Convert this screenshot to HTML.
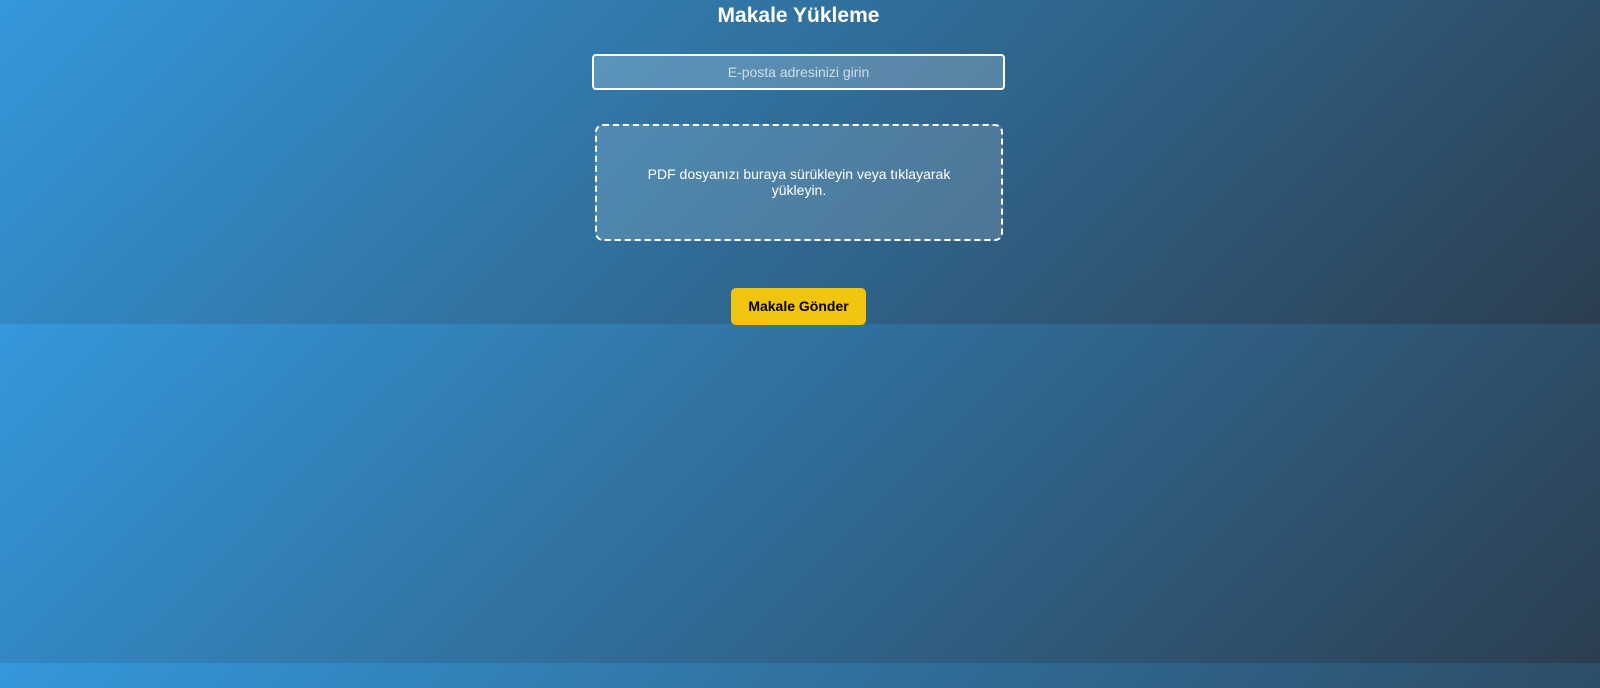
<!DOCTYPE html>
<html><head><meta charset="utf-8"><style>
html,body{margin:0;padding:0;width:1600px;height:688px;overflow:hidden;font-family:"Liberation Sans",Arial,sans-serif;}
body{position:relative;}
.bg{position:absolute;left:0;width:1600px;background:linear-gradient(135deg,#3498db,#2c3e50);}
h1{position:absolute;top:4px;left:0;width:1597px;text-align:center;margin:0;color:#fff;font-size:21px;font-weight:bold;}
.inp{position:absolute;left:592px;top:54px;width:409px;height:32px;border:2px solid #fff;border-radius:4px;background:rgba(255,255,255,0.2);color:rgba(255,255,255,0.7);font-size:14px;text-align:center;line-height:32px;}
.dz{position:absolute;left:595px;top:124px;width:404px;height:113px;border:2px dashed #fff;border-radius:8px;background:rgba(255,255,255,0.15);color:#fff;font-size:14px;text-align:center;display:flex;align-items:center;justify-content:center;line-height:16px;}
.dz span{width:320px;margin-top:-2px}
.btn{position:absolute;left:731px;top:288px;width:135px;height:37px;border-radius:5px;background:#f1c40f;color:#000;font-weight:bold;font-size:14px;text-align:center;line-height:37px;}
</style></head><body>
<div class="bg" style="top:0;height:324px"></div>
<div class="bg" style="top:324px;height:339px"></div>
<div class="bg" style="top:663px;height:25px;background:linear-gradient(135deg,#3498db,#2c3e50);background-size:1600px 339px;background-repeat:no-repeat"></div>
<h1>Makale Yükleme</h1>
<div class="inp">E-posta adresinizi girin</div>
<div class="dz"><span>PDF dosyanızı buraya sürükleyin veya tıklayarak yükleyin.</span></div>
<div class="btn">Makale Gönder</div>
</body></html>
